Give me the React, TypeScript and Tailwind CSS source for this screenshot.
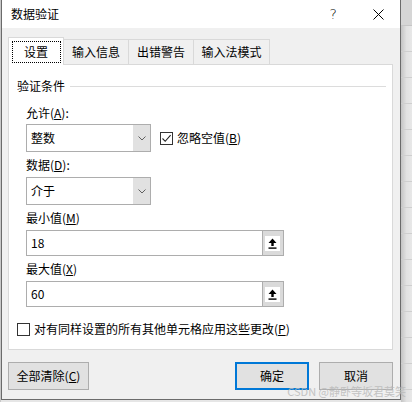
import type { ReactNode } from 'react';

const font = { fontFamily: '"Noto Sans CJK SC", "Microsoft YaHei", sans-serif' };

function Chevron() {
  return (
    <svg width="8" height="5" viewBox="0 0 8 5" fill="none">
      <path d="M0.5 0.5 L4 4 L7.5 0.5" stroke="#606060" strokeWidth="1" />
    </svg>
  );
}

function Combo({ value }: { value: string }) {
  return (
    <div className="flex h-[28px] w-[125px] border border-[#adadad] bg-white">
      <div className="flex flex-1 items-center pl-[4px] text-[12px]">{value}</div>
      <div className="flex w-[17px] items-center justify-center bg-[#e1e1e1]">
        <Chevron />
      </div>
    </div>
  );
}

function RangeInput({ value }: { value: string }) {
  return (
    <div className="flex h-[26px] w-[258px] border border-[#adadad] bg-white">
      <div className="flex flex-1 items-center pl-[4px] text-[12px]">{value}</div>
      <div className="flex w-[21px] items-center justify-center border-l border-[#adadad] bg-[#dadada] pr-[1px]">
        <div className="flex h-[15px] w-[15px] items-center justify-center bg-white">
          <svg width="9" height="11" viewBox="0 0 9 11">
            <path d="M4.5 0.5 L8.5 5 L5.7 5 L5.7 8 L3.3 8 L3.3 5 L0.5 5 Z" fill="#000" />
            <rect x="0.5" y="9.4" width="8" height="1.4" fill="#000" />
          </svg>
        </div>
      </div>
    </div>
  );
}

function CheckBox({ checked }: { checked?: boolean }) {
  return (
    <div className="flex h-[13px] w-[13px] items-center justify-center border border-[#333] bg-white">
      {checked && (
        <svg width="11" height="11" viewBox="0 0 11 11" fill="none">
          <path d="M1.5 5.5 L4.2 8.3 L9.6 2.2" stroke="#222" strokeWidth="1.1" />
        </svg>
      )}
    </div>
  );
}

function Label({ children, className = '' }: { children: ReactNode; className?: string }) {
  return <div className={`flex h-[16px] items-center text-[12px] leading-none ${className}`}>{children}</div>;
}

function Tab({ label, width, first }: { label: string; width: string; first?: boolean }) {
  return (
    <div
      className={`flex h-[25px] items-center justify-center border-t border-r border-[#d9d9d9] bg-[#f0f0f0] text-[12px] ${width} ${
        first ? 'border-l' : ''
      }`}
    >
      {label}
    </div>
  );
}

function Button({ children, primary, width }: { children: ReactNode; primary?: boolean; width: string }) {
  return (
    <div
      className={`flex h-[28px] items-center justify-center bg-[#e1e1e1] text-[12px] ${width} ${
        primary ? 'border-2 border-[#0078d7]' : 'border border-[#adadad]'
      }`}
    >
      {children}
    </div>
  );
}

export default function App() {
  return (
    <div className="relative flex h-[402px] w-[412px] overflow-hidden bg-[#e6e6e6] text-black" style={font}>
      <div className="w-[1px] bg-[#c8c8c8]" />

      <div className="flex h-[400px] w-[400px] flex-col border-x border-b border-[#6b6b6b]">
        {/* title bar */}
        <div className="flex h-[28px] items-center bg-white pl-[9px]">
          <span className="text-[12px]">数据验证</span>
          <div className="flex-1" />
          <span className="mr-[36px] text-[14px] leading-none" style={{ fontFamily: '"DejaVu Sans", sans-serif', fontWeight: 300 }}>
            ?
          </span>
          <svg width="11" height="11" viewBox="0 0 11 11" className="mr-[16px]">
            <path d="M0.5 0.5 L10.5 10.5 M10.5 0.5 L0.5 10.5" stroke="#000" strokeWidth="1" />
          </svg>
        </div>

        <div className="flex flex-1 flex-col bg-[#f0f0f0] pl-[6px]">
          {/* tabs */}
          <div className="relative z-10 mt-[9px] flex h-[27px] items-end">
            <div className="-mb-px flex h-[28px] w-[56px] items-center justify-center border-x border-t border-[#d9d9d9] bg-white">
              <span className="flex h-[22px] w-[49px] items-center justify-center border border-dotted border-black text-[12px]">
                设置
              </span>
            </div>
            <Tab label="输入信息" width="w-[65px]" />
            <Tab label="出错警告" width="w-[65px]" />
            <Tab label="输入法模式" width="w-[76px]" />
          </div>

          {/* panel */}
          <div className="flex h-[286px] w-[385px] flex-col border border-[#d9d9d9] bg-white pl-[8px]">
            <div className="mt-[13px] flex h-[16px] items-center pr-[6px]">
              <span className="text-[12px] leading-none">验证条件</span>
              <div className="ml-[5px] h-px flex-1 bg-[#dcdcdc]" />
            </div>

            <div className="pl-[9px]">
              <Label className="mt-[11px]">
                允许(<span className="underline">A</span>):
              </Label>
              <div className="mt-[3px] flex items-center">
                <Combo value="整数" />
                <div className="ml-[9px] flex items-center">
                  <CheckBox checked />
                  <span className="ml-[4px] text-[12px]">
                    忽略空值(<span className="underline">B</span>)
                  </span>
                </div>
              </div>

              <Label className="mt-[5px]">
                数据(<span className="underline">D</span>):
              </Label>
              <div className="mt-[4px]">
                <Combo value="介于" />
              </div>

              <Label className="mt-[5px]">
                最小值(<span className="underline">M</span>)
              </Label>
              <div className="mt-[4px]">
                <RangeInput value="18" />
              </div>

              <Label className="mt-[5px]">
                最大值(<span className="underline">X</span>)
              </Label>
              <div className="mt-[4px]">
                <RangeInput value="60" />
              </div>
            </div>

            <div className="mt-[14px] flex h-[16px] items-center">
              <CheckBox />
              <span className="ml-[4px] text-[12px] tracking-[0px]">
                对有同样设置的所有其他单元格应用这些更改(<span className="underline">P</span>)
              </span>
            </div>
          </div>

          {/* buttons */}
          <div className="mt-[12px] flex w-[385px] items-center">
            <Button width="w-[81px]">
              全部清除(<span className="underline">C</span>)
            </Button>
            <div className="flex-1" />
            <Button width="w-[74px]" primary>
              确定
            </Button>
            <div className="w-[10px]" />
            <Button width="w-[74px]">取消</Button>
          </div>
        </div>
      </div>

      {/* sheet strip on the right */}
      <div className="flex flex-1 flex-col bg-gradient-to-r from-[#c4c4c4] via-[#e2e2e2] to-[#e8e8e8]">
        <div className="h-[26px] border-b border-[#c6c6c6] bg-[#d6d6d6]" />
        {Array.from({ length: 14 }).map((_, i) => (
          <div key={i} className="h-[26px] border-b border-[#cfcfcf]" />
        ))}
      </div>

      {/* watermark */}
      <span className="pointer-events-none absolute bottom-[5px] right-[6px] text-[11px] leading-none text-[#b8b8b8] opacity-80">
        CSDN @静卧等坂君莫笑
      </span>
    </div>
  );
}
